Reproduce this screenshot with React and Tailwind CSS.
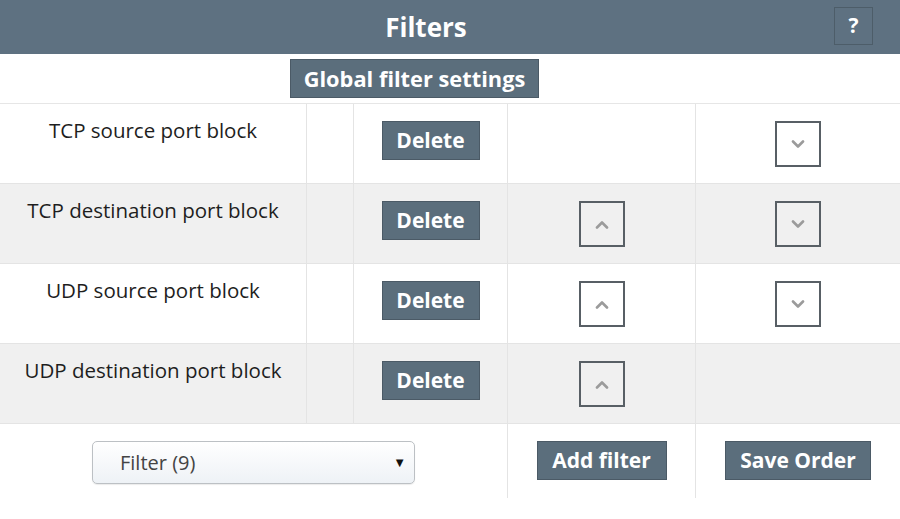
import React from "react";

const filters = [
  { name: "TCP source port block", up: false, down: true },
  { name: "TCP destination port block", up: true, down: true },
  { name: "UDP source port block", up: true, down: true },
  { name: "UDP destination port block", up: true, down: false },
];

const Chevron = ({ dir }) => (
  <svg width="14" height="9" viewBox="0 0 14 9" fill="none">
    <path
      d={dir === "up" ? "M2 7.5 L7 2.5 L12 7.5" : "M2 1.5 L7 6.5 L12 1.5"}
      stroke="#9b9b9b"
      strokeWidth="2.6"
      strokeLinecap="round"
      strokeLinejoin="round"
    />
  </svg>
);

const MoveButton = ({ dir }) => (
  <button className="w-[46px] h-[46px] border-2 border-[#585f65] flex items-center justify-center">
    <Chevron dir={dir} />
  </button>
);

const SlateButton = ({ children, className = "" }) => (
  <button
    className={
      "h-[39px] flex items-center justify-center bg-[#5b6e7c] border border-[#4b5a66] text-white font-bold leading-none " +
      className
    }
  >
    {children}
  </button>
);

const cols = "grid grid-cols-[306px_47px_154px_188px_205px]";

export default function App() {
  return (
    <div
      className="w-[900px] h-[519px] bg-white overflow-hidden"
      style={{ fontFamily: '"Open Sans", "Liberation Sans", sans-serif' }}
    >
      {/* Header */}
      <div className="h-[54px] bg-[#5e7181] flex items-center">
        <div className="flex-1 pl-[18px] text-center text-white font-bold text-[26px]">
          Filters
        </div>
        <button className="w-[39px] h-[38px] mr-[27px] mb-[2px] border border-[#4d5d69] text-white font-bold text-[21px] flex items-center justify-center">
          ?
        </button>
      </div>

      {/* Global settings */}
      <div className="h-[49px] flex justify-center pt-[5px]">
        <SlateButton className="w-[249px] ml-[-71px] text-[21.8px]">Global filter settings</SlateButton>
      </div>

      {/* Filter rows */}
      <div className="border-t border-[#e6e6e6]">
        {filters.map((f, i) => (
          <div
            key={f.name}
            className={
              cols +
              " h-[80px] border-b border-[#e4e4e4] " +
              (i % 2 === 1 ? "bg-[#f0f0f0]" : "bg-white")
            }
          >
            <div className="pt-3 text-center text-[20.5px] leading-7 text-[#1e1e1e]">{f.name}</div>
            <div className="border-l border-[#e4e4e4]" />
            <div className="border-l border-[#e4e4e4] pt-[17px] flex justify-center">
              <SlateButton className="w-[98px] text-[21px]">Delete</SlateButton>
            </div>
            <div className="border-l border-[#e4e4e4] pt-[17px] flex justify-center">
              {f.up && <MoveButton dir="up" />}
            </div>
            <div className="border-l border-[#e4e4e4] pt-[17px] flex justify-center">
              {f.down && <MoveButton dir="down" />}
            </div>
          </div>
        ))}

        {/* Footer */}
        <div className="grid grid-cols-[507px_188px_205px] h-[74px]">
          <div className="pt-[17px] flex justify-center">
            <div className="w-[323px] h-[43px] rounded-[5px] border border-[#bcc0c4] bg-gradient-to-b from-white to-[#eef2f6] shadow-[0_1px_1px_rgba(0,0,0,0.08)] flex items-center justify-between pl-[27px] pr-[8px]">
              <span className="text-[20px] text-[#444]">Filter (9)</span>
              <span className="text-[13px] text-[#111]">▼</span>
            </div>
          </div>
          <div className="border-l border-[#e4e4e4] pt-[17px] flex justify-center">
            <SlateButton className="w-[130px] text-[21px]">Add filter</SlateButton>
          </div>
          <div className="border-l border-[#e4e4e4] pt-[17px] flex justify-center">
            <SlateButton className="w-[146px] text-[21px]">Save Order</SlateButton>
          </div>
        </div>
      </div>
    </div>
  );
}
